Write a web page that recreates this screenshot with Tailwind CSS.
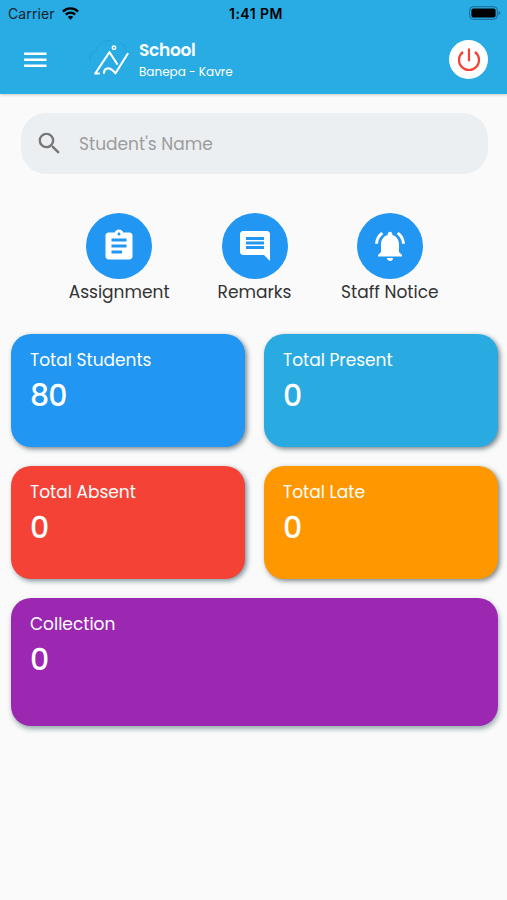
<!DOCTYPE html>
<html lang="en">

<head>
  <title>School</title>
  <meta charset="UTF-8">
  <meta name="viewport" content="width=device-width, initial-scale=1.0">
  <script src="https://cdn.jsdelivr.net/npm/@tailwindcss/browser@4"></script>
</head>

<body class="h-[900px] overflow-hidden bg-[#fafafa] font-['Poppins','Inter',sans-serif] text-[#333]">

<header class="h-[94px] bg-[#29abe4] shadow-[0_1px_3px_rgba(0,0,0,0.2)]">
  <div class="grid h-7 grid-cols-3 items-center pl-2 pr-[6px] font-['Inter',sans-serif] text-[14px] text-[#10242e]">
    <div class="mb-[2px] flex items-center gap-[7px]">
      <span class="w-[47px] tracking-[0.1px]">Carrier</span>
      <svg class="h-[13px] w-[17px]" viewBox="0 0 17 13" fill="none" stroke="#000" stroke-width="2.3">
        <path d="M.9 4.6a10.8 10.8 0 0 1 15.2 0M3.8 7.6a6.7 6.7 0 0 1 9.4 0" />
        <path d="M8.5 12.7 5.8 10a3.9 3.9 0 0 1 5.4 0z" fill="#000" stroke="none" />
      </svg>
    </div>
    <span class="mb-[2px] pl-[3px] text-center font-semibold tracking-[0.45px] text-black">1:41 PM</span>
    <svg class="mb-[2px] h-[14px] w-[32px] justify-self-end" viewBox="0 0 32 14">
      <rect x=".7" y=".7" width="27.6" height="12.6" rx="3.5" fill="none" stroke="#17698d" />
      <rect x="2.4" y="2.4" width="24.2" height="9.2" rx="2" />
      <path d="M29.6 5v4q1.7-.5 1.7-2t-1.7-2z" fill="#17698d" />
    </svg>
  </div>

  <div class="flex h-[63px] items-center pl-[21px] pr-[19px]">
    <svg class="mr-[31px] size-7" viewBox="0 0 28 28" fill="#fff">
      <path d="M3 6.4h22.5v2.6H3zM3 12.4h22.5v2.6H3zM3 18.4h22.5v2.6H3z" />
    </svg>
    <svg class="h-[50px] w-[59px]" viewBox="0 0 59 50" fill="none" stroke="#fff" stroke-width="2.1" stroke-linecap="round" stroke-linejoin="round">
      <path d="M10 25c-1-5 2-9 6-9 2-7 9-12 15-10M39 8c4 0 7 3 7 7" stroke="#239bd0" stroke-width=".7" />
      <circle cx="34" cy="12.8" r="1.7" stroke-width="1.5" />
      <path d="M19 38.5H15.2L29.5 17.2 37 28.8M47.7 18.8 35.5 38.3 32.5 35.3C29 32 24 33 24 38" />
    </svg>
    <div class="flex grow flex-col pt-px text-white">
      <span class="text-[17px] leading-6 font-semibold tracking-[-0.3px]">School</span>
      <span class="text-[12px] leading-5">Banepa - Kavre</span>
    </div>
    <button class="flex size-[39px] items-center justify-center rounded-full bg-white">
      <svg class="size-6" viewBox="0 0 24 24" fill="none" stroke="#f44336" stroke-width="2.2">
        <path d="M12 .5v12.8M6 4a10 10 0 1 0 12 0" />
      </svg>
    </button>
  </div>
</header>

<main>
  <label class="ml-[21px] mr-[19px] mt-[19px] flex h-[61px] items-center rounded-[25px] bg-[#eceff1] pl-[14px]">
    <svg class="size-[29px]" viewBox="0 0 24 24" fill="#777">
      <path d="M15.5 14h-.79l-.28-.27A6.47 6.47 0 0 0 16 9.5 6.5 6.5 0 1 0 9.5 16c1.61 0 3.09-.59 4.23-1.57l.27.28v.79l5 4.99L20.49 19l-4.99-5zm-6 0C7.01 14 5 11.99 5 9.5S7.01 5 9.5 5 14 7.01 14 9.5 11.99 14 9.5 14z" />
    </svg>
    <span class="ml-[15px] pt-[2px] text-[17px] text-[#9c9c9c]">Student's Name</span>
  </label>

  <nav class="ml-[51.5px] mt-[39px] grid w-[406px] grid-cols-3 text-center text-[17px] leading-[26px]">
    <a class="flex flex-col items-center">
      <span class="flex size-[66px] items-center justify-center rounded-full bg-[#2196f3]">
        <svg class="size-9" viewBox="0 0 24 24" fill="#fff">
          <path d="M19 3h-4.18C14.4 1.84 13.3 1 12 1c-1.3 0-2.4.84-2.82 2H5c-1.1 0-2 .9-2 2v14c0 1.1.9 2 2 2h14c1.1 0 2-.9 2-2V5c0-1.1-.9-2-2-2zm-7 0c.55 0 1 .45 1 1s-.45 1-1 1-1-.45-1-1 .45-1 1-1zm2 14H7v-2h7v2zm3-4H7v-2h10v2zm0-4H7V7h10v2z" />
        </svg>
      </span>
      <span>Assignment</span>
    </a>
    <a class="flex flex-col items-center">
      <span class="ml-px flex size-[66px] items-center justify-center rounded-full bg-[#2196f3]">
        <svg class="size-9" viewBox="0 0 24 24" fill="#fff">
          <path d="M21.99 4c0-1.1-.89-2-1.99-2H4c-1.1 0-2 .9-2 2v12c0 1.1.9 2 2 2h14l4 4-.01-18zM18 14H6v-2h12v2zm0-3H6V9h12v2zm0-3H6V6h12v2z" />
        </svg>
      </span>
      <span>Remarks</span>
    </a>
    <a class="flex flex-col items-center">
      <span class="flex size-[66px] items-center justify-center rounded-full bg-[#2196f3]">
        <svg class="size-9" viewBox="0 0 24 24" fill="#fff">
          <path d="M7.58 4.08 6.15 2.65C3.75 4.48 2.17 7.3 2.03 10.5h2a8.45 8.45 0 0 1 3.55-6.42zm12.39 6.42h2c-.15-3.2-1.73-6.02-4.12-7.85l-1.42 1.43a8.5 8.5 0 0 1 3.54 6.42zM18 11c0-3.07-1.64-5.64-4.5-6.32V4c0-.83-.67-1.5-1.5-1.5s-1.5.67-1.5 1.5v.68C7.63 5.36 6 7.92 6 11v5l-2 2v1h16v-1l-2-2v-5zm-6 11c.14 0 .27-.01.4-.04.65-.14 1.18-.58 1.44-1.18.1-.24.15-.5.15-.78h-4c.01 1.1.9 2 2.01 2z" />
        </svg>
      </span>
      <span>Staff Notice</span>
    </a>
  </nav>

  <section class="ml-[10.5px] mr-[9.5px] mt-[29.4px] grid grid-cols-2 gap-x-[19px] gap-y-[19.5px] text-white">
    <div class="h-[112.5px] rounded-[20px] bg-[#2196f3] pl-[19.5px] pt-[13.5px] shadow-[2px_2px_5px_rgba(55,71,79,0.65)]">
      <h2 class="text-[17px] leading-6">Total Students</h2>
      <p class="mt-[6px] text-[30px] leading-9 font-medium tracking-[-0.8px]">80</p>
    </div>
    <div class="h-[112.5px] rounded-[20px] bg-[#29abe2] pl-[19.5px] pt-[13.5px] shadow-[2px_2px_5px_rgba(55,71,79,0.65)]">
      <h2 class="text-[17px] leading-6">Total Present</h2>
      <p class="mt-[6px] text-[30px] leading-9 font-medium">0</p>
    </div>
    <div class="h-[112.5px] rounded-[20px] bg-[#f44336] pl-[19.5px] pt-[13.5px] shadow-[2px_2px_5px_rgba(55,91,109,0.65)]">
      <h2 class="text-[17px] leading-6">Total Absent</h2>
      <p class="mt-[6px] text-[30px] leading-9 font-medium">0</p>
    </div>
    <div class="h-[112.5px] rounded-[20px] bg-[#ff9800] pl-[19.5px] pt-[13.5px] shadow-[2px_2px_5px_rgba(55,71,79,0.65)]">
      <h2 class="text-[17px] leading-6">Total Late</h2>
      <p class="mt-[6px] text-[30px] leading-9 font-medium">0</p>
    </div>
    <div class="col-span-2 h-32 rounded-[20px] bg-[#9c27b0] pl-[19.5px] pt-[13.5px] shadow-[1px_3px_5px_rgba(55,91,99,0.5)]">
      <h2 class="text-[17px] leading-6">Collection</h2>
      <p class="mt-[6px] text-[30px] leading-9 font-medium">0</p>
    </div>
  </section>
</main>

</body>

</html>
